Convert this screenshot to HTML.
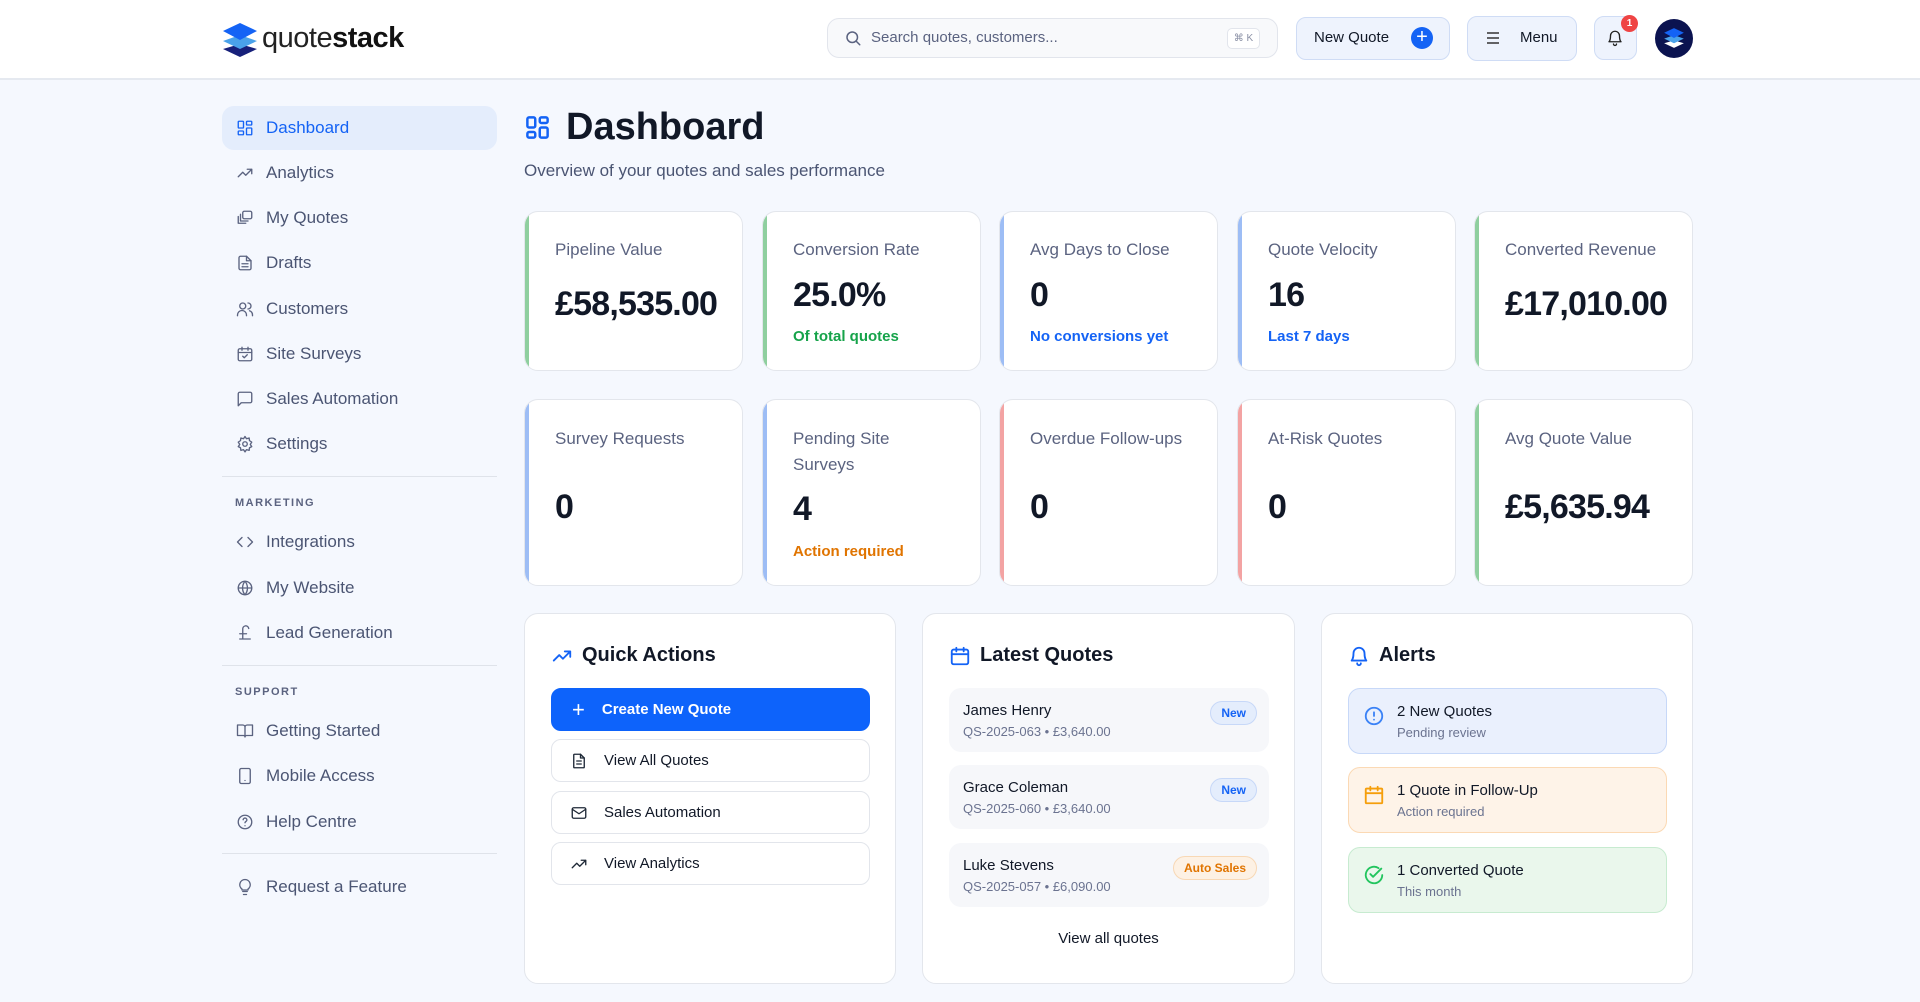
<!DOCTYPE html>
<html><head><meta charset="utf-8"><style>
*{box-sizing:border-box;margin:0;padding:0}
body{width:1920px;height:1002px;overflow:hidden;background:#f5f8fe;font-family:"Liberation Sans",sans-serif;color:#0f172a;position:relative}
.a{position:absolute}
.hdr{left:0;top:0;width:1920px;height:80px;background:#fff;border-bottom:2px solid #e5e9f0}
.nav{left:222px;width:275px;height:44px;display:flex;align-items:center;padding-left:14px;font-size:17px;color:#4b5573}
.nav svg{width:18px;height:18px;margin-right:12px;stroke:#5b6380;fill:none;stroke-width:1.8;stroke-linecap:round;stroke-linejoin:round}
.nav.act{background:#e4edfc;border-radius:12px;color:#1463f5}
.nav.act svg{stroke:#1463f5}
.sep{left:222px;width:275px;height:1px;background:#dfe3ea}
.sec{left:235px;font-size:11px;letter-spacing:1.5px;font-weight:bold;color:#5b6380}
.card{background:#fff;border:1px solid #e3e6ec;border-radius:14px;overflow:hidden}
.card .bar{position:absolute;left:0;top:0;bottom:0;width:4px}
.lbl{position:absolute;left:30px;font-size:17px;color:#5b6380;line-height:26px}
.val{position:absolute;left:30px;font-size:34px;font-weight:bold;color:#111827;letter-spacing:-0.8px}
.sub{position:absolute;left:30px;font-size:15px;font-weight:bold}
.panel{background:#fff;border:1px solid #e3e6ec;border-radius:14px}
.ptitle{position:absolute;top:30px;left:26px;font-size:20px;font-weight:bold;display:flex;align-items:center;color:#111827}
.ptitle svg{width:22px;height:22px;margin-right:9px;stroke:#1463f5;fill:none;stroke-width:2;stroke-linecap:round;stroke-linejoin:round}
.qa{position:absolute;left:26px;width:319px;height:43px;border:1.5px solid #e2e5eb;border-radius:10px;display:flex;align-items:center;padding-left:18px;font-size:15px;color:#111827}
.qa svg{width:18px;height:18px;margin-right:16px;stroke:#1f2937;fill:none;stroke-width:1.8;stroke-linecap:round;stroke-linejoin:round}
.lq{position:absolute;left:26px;width:320px;height:64px;background:#f6f7fa;border-radius:12px}
.lq .n{position:absolute;left:14px;top:14px;font-size:15px;color:#111827}
.lq .m{position:absolute;left:14px;top:36px;font-size:13px;color:#6b7390}
.badge{position:absolute;right:12px;top:13px;height:24px;padding:0 10px;border-radius:12px;font-size:12px;font-weight:bold;line-height:22px}
.al{position:absolute;left:26px;width:319px;height:66px;border-radius:12px;border:1.5px solid}
.al svg{position:absolute;left:14px;top:16px;width:22px;height:22px;fill:none;stroke-width:2;stroke-linecap:round;stroke-linejoin:round}
.al .n{position:absolute;left:48px;top:14px;font-size:15px;color:#111827}
.al .m{position:absolute;left:48px;top:36px;font-size:13px;color:#6b7390}
</style></head><body>
<div class="a hdr"></div>
<svg class="a" style="left:221px;top:22px" width="38" height="36" viewBox="0 0 38 36">
<path d="M19 22 L36 27 L19 35 L2 27 Z" fill="#17207a"/>
<path d="M19 13 L36 19 L19 27 L2 19 Z" fill="#4aa2ea"/>
<path d="M19 1 L36 9 L19 18 L2 9 Z" fill="#1463f5"/>
</svg>
<div class="a" style="left:262px;top:22px;font-size:29px;color:#111;letter-spacing:-0.5px"><span style="color:#222">quote</span><b>stack</b></div>
<div class="a" style="left:827px;top:18px;width:451px;height:40px;border:1.5px solid #e2e5ec;border-radius:12px;background:#f8f9fb"></div>
<svg class="a" style="left:844px;top:29px" width="18" height="18" viewBox="0 0 24 24" fill="none" stroke="#5b6380" stroke-width="2" stroke-linecap="round"><circle cx="11" cy="11" r="7"/><path d="M16.5 16.5L21 21"/></svg>
<div class="a" style="left:871px;top:29px;font-size:15px;color:#5b6380">Search quotes, customers...</div>
<div class="a" style="left:1227px;top:28px;width:33px;height:21px;border:1px solid #e2e5ec;border-radius:5px;background:#fff;font-size:10px;color:#8a90a5;text-align:center;line-height:19px">⌘ K</div>
<div class="a" style="left:1296px;top:17px;width:154px;height:43px;border:1.5px solid #cfdcf5;border-radius:10px;background:#eef3fd"></div>
<div class="a" style="left:1314px;top:29px;font-size:15px;color:#111827">New Quote</div>
<div class="a" style="left:1411px;top:27px;width:22px;height:22px;border-radius:50%;background:#1463f5;color:#fff;font-size:20px;line-height:21px;text-align:center">+</div>
<div class="a" style="left:1467px;top:16px;width:110px;height:45px;border:1.5px solid #cfdcf5;border-radius:10px;background:#eef3fd"></div>
<svg class="a" style="left:1486px;top:32px" width="14" height="12" viewBox="0 0 14 12" stroke="#333" stroke-width="1.6"><path d="M1 1h12M1 6h12M1 11h12"/></svg>
<div class="a" style="left:1520px;top:29px;font-size:15px;color:#111827">Menu</div>
<div class="a" style="left:1594px;top:16px;width:43px;height:44px;border:1.5px solid #cfdcf5;border-radius:10px;background:#eef3fd"></div>
<svg class="a" style="left:1606px;top:28px" width="18" height="20" viewBox="0 0 24 24" fill="none" stroke="#222" stroke-width="1.8" stroke-linecap="round" stroke-linejoin="round"><path d="M6 9a6 6 0 0 1 12 0c0 6 2 8 2 8H4s2-2 2-8"/><path d="M10 20a2 2 0 0 0 4 0"/></svg>
<div class="a" style="left:1621px;top:15px;width:17px;height:17px;border-radius:50%;background:#ef4444;color:#fff;font-size:10px;font-weight:bold;text-align:center;line-height:17px">1</div>
<div class="a" style="left:1655px;top:19px;width:38px;height:39px;border-radius:50%;background:#0b1350"></div>
<svg class="a" style="left:1663px;top:27px" width="22" height="22" viewBox="0 0 38 36"><path d="M19 22 L36 27 L19 35 L2 27 Z" fill="#fff"/><path d="M19 13 L36 19 L19 27 L2 19 Z" fill="#4aa2ea"/><path d="M19 1 L36 9 L19 18 L2 9 Z" fill="#1463f5"/></svg>

<div class="a nav act" style="top:106px"><svg viewBox="0 0 24 24"><rect x="3" y="3" width="7" height="9" rx="1"/><rect x="14" y="3" width="7" height="5" rx="1"/><rect x="14" y="12" width="7" height="9" rx="1"/><rect x="3" y="16" width="7" height="5" rx="1"/></svg>Dashboard</div>
<div class="a nav" style="top:151px"><svg viewBox="0 0 24 24"><path d="M3 17l6-6 4 4 8-8M15 7h6v6"/></svg>Analytics</div>
<div class="a nav" style="top:196px"><svg viewBox="0 0 24 24"><rect x="9" y="3" width="12" height="10" rx="2"/><path d="M6 7v9h10M3 10v9h10"/></svg>My Quotes</div>
<div class="a nav" style="top:241px"><svg viewBox="0 0 24 24"><path d="M14 3H6a2 2 0 0 0-2 2v14a2 2 0 0 0 2 2h12a2 2 0 0 0 2-2V9z"/><path d="M14 3v6h6M8 13h8M8 17h8"/></svg>Drafts</div>
<div class="a nav" style="top:287px"><svg viewBox="0 0 24 24"><circle cx="9" cy="8" r="4"/><path d="M2 21v-1a6 6 0 0 1 12 0v1M16 4a4 4 0 0 1 0 8M22 21v-1a6 6 0 0 0-4-5.6"/></svg>Customers</div>
<div class="a nav" style="top:332px"><svg viewBox="0 0 24 24"><rect x="3" y="5" width="18" height="16" rx="2"/><path d="M8 3v4M16 3v4M3 10h18M9 15l2 2 4-4"/></svg>Site Surveys</div>
<div class="a nav" style="top:377px"><svg viewBox="0 0 24 24"><path d="M21 15a2 2 0 0 1-2 2H7l-4 4V5a2 2 0 0 1 2-2h14a2 2 0 0 1 2 2z"/></svg>Sales Automation</div>
<div class="a nav" style="top:422px"><svg viewBox="0 0 24 24"><circle cx="12" cy="12" r="3"/><path d="M12 2l2 3 3.5-1 .5 3.5 3 2-2 3 2 3-3 1.5-.5 3.5-3.5-1-2 3-2-3-3.5 1-.5-3.5-3-1.5 2-3-2-3 3-2 .5-3.5 3.5 1z"/></svg>Settings</div>
<div class="a sep" style="top:476px"></div>
<div class="a sec" style="top:497px">MARKETING</div>
<div class="a nav" style="top:520px"><svg viewBox="0 0 24 24"><path d="M8 6l-6 6 6 6M16 6l6 6-6 6"/></svg>Integrations</div>
<div class="a nav" style="top:566px"><svg viewBox="0 0 24 24"><circle cx="12" cy="12" r="9"/><path d="M3 12h18M12 3a14 14 0 0 1 0 18M12 3a14 14 0 0 0 0 18"/></svg>My Website</div>
<div class="a nav" style="top:611px"><svg viewBox="0 0 24 24"><path d="M17 6a4 4 0 0 0-8 1v13M5 20h14M5 13h9"/></svg>Lead Generation</div>
<div class="a sep" style="top:665px"></div>
<div class="a sec" style="top:686px">SUPPORT</div>
<div class="a nav" style="top:709px"><svg viewBox="0 0 24 24"><path d="M2 4h7a3 3 0 0 1 3 3v13a2 2 0 0 0-2-2H2zM22 4h-7a3 3 0 0 0-3 3v13a2 2 0 0 1 2-2h8z"/></svg>Getting Started</div>
<div class="a nav" style="top:754px"><svg viewBox="0 0 24 24"><rect x="5" y="2" width="14" height="20" rx="2"/><path d="M12 18h.01"/></svg>Mobile Access</div>
<div class="a nav" style="top:800px"><svg viewBox="0 0 24 24"><circle cx="12" cy="12" r="9"/><path d="M9.5 9a2.5 2.5 0 0 1 5 .5c0 1.5-2.5 2-2.5 3.5M12 17h.01"/></svg>Help Centre</div>
<div class="a sep" style="top:853px"></div>
<div class="a nav" style="top:865px"><svg viewBox="0 0 24 24"><path d="M9 18h6M10 22h4M12 2a7 7 0 0 0-4 12.7V16h8v-1.3A7 7 0 0 0 12 2z"/></svg>Request a Feature</div>

<svg class="a" style="left:524px;top:114px" width="27" height="27" viewBox="0 0 24 24" fill="none" stroke="#1463f5" stroke-width="2.2"><rect x="3" y="3" width="7" height="9" rx="1.5"/><rect x="14" y="3" width="7" height="5" rx="1.5"/><rect x="14" y="12" width="7" height="9" rx="1.5"/><rect x="3" y="16" width="7" height="5" rx="1.5"/></svg>
<div class="a" style="left:566px;top:106px;font-size:38px;font-weight:bold;color:#111827">Dashboard</div>
<div class="a" style="left:524px;top:161px;font-size:17px;color:#4b5573">Overview of your quotes and sales performance</div>

<div class="a card" style="left:524px;top:211px;width:219px;height:160px"><div class="bar" style="background:#8fcf9f"></div><div class="lbl" style="top:25px">Pipeline Value</div><div class="val" style="top:73px">£58,535.00</div></div>
<div class="a card" style="left:762px;top:211px;width:219px;height:160px"><div class="bar" style="background:#8fcf9f"></div><div class="lbl" style="top:25px">Conversion Rate</div><div class="val" style="top:64px">25.0%</div><div class="sub" style="top:116px;color:#16a34a">Of total quotes</div></div>
<div class="a card" style="left:999px;top:211px;width:219px;height:160px"><div class="bar" style="background:#9dbdf5"></div><div class="lbl" style="top:25px">Avg Days to Close</div><div class="val" style="top:64px">0</div><div class="sub" style="top:116px;color:#1463f5">No conversions yet</div></div>
<div class="a card" style="left:1237px;top:211px;width:219px;height:160px"><div class="bar" style="background:#9dbdf5"></div><div class="lbl" style="top:25px">Quote Velocity</div><div class="val" style="top:64px">16</div><div class="sub" style="top:116px;color:#1463f5">Last 7 days</div></div>
<div class="a card" style="left:1474px;top:211px;width:219px;height:160px"><div class="bar" style="background:#8fcf9f"></div><div class="lbl" style="top:25px">Converted Revenue</div><div class="val" style="top:73px">£17,010.00</div></div>

<div class="a card" style="left:524px;top:399px;width:219px;height:187px"><div class="bar" style="background:#9dbdf5"></div><div class="lbl" style="top:26px">Survey Requests</div><div class="val" style="top:88px">0</div></div>
<div class="a card" style="left:762px;top:399px;width:219px;height:187px"><div class="bar" style="background:#9dbdf5"></div><div class="lbl" style="top:26px">Pending Site<br>Surveys</div><div class="val" style="top:90px">4</div><div class="sub" style="top:143px;color:#e07400">Action required</div></div>
<div class="a card" style="left:999px;top:399px;width:219px;height:187px"><div class="bar" style="background:#f3a3a3"></div><div class="lbl" style="top:26px">Overdue Follow-ups</div><div class="val" style="top:88px">0</div></div>
<div class="a card" style="left:1237px;top:399px;width:219px;height:187px"><div class="bar" style="background:#f3a3a3"></div><div class="lbl" style="top:26px">At-Risk Quotes</div><div class="val" style="top:88px">0</div></div>
<div class="a card" style="left:1474px;top:399px;width:219px;height:187px"><div class="bar" style="background:#8fcf9f"></div><div class="lbl" style="top:26px">Avg Quote Value</div><div class="val" style="top:88px">£5,635.94</div></div>

<div class="a panel" style="left:524px;top:613px;width:372px;height:371px">
<div class="ptitle"><svg viewBox="0 0 24 24"><path d="M3 17l6-6 4 4 8-8M15 7h6v6"/></svg>Quick Actions</div>
<div class="qa" style="top:74px;background:#0d63fb;border-color:#0d63fb;color:#fff;font-weight:bold"><span style="font-size:22px;font-weight:normal;margin-right:17px;margin-left:2px">+</span>Create New Quote</div>
<div class="qa" style="top:125px"><svg viewBox="0 0 24 24"><path d="M14 3H6a1 1 0 0 0-1 1v16a1 1 0 0 0 1 1h12a1 1 0 0 0 1-1V8z"/><path d="M14 3v5h5M9 12h6M9 16h6"/></svg>View All Quotes</div>
<div class="qa" style="top:177px"><svg viewBox="0 0 24 24"><rect x="3" y="5" width="18" height="14" rx="2"/><path d="M3 7l9 6 9-6"/></svg>Sales Automation</div>
<div class="qa" style="top:228px"><svg viewBox="0 0 24 24"><path d="M3 17l6-6 4 4 8-8M15 7h6v6"/></svg>View Analytics</div>
</div>

<div class="a panel" style="left:922px;top:613px;width:373px;height:371px">
<div class="ptitle"><svg viewBox="0 0 24 24"><rect x="3" y="5" width="18" height="16" rx="2"/><path d="M8 3v4M16 3v4M3 10h18"/></svg>Latest Quotes</div>
<div class="lq" style="top:74px"><div class="n">James Henry</div><div class="m">QS-2025-063 • £3,640.00</div><div class="badge" style="background:#e4edfc;border:1px solid #c7d8f8;color:#1463f5">New</div></div>
<div class="lq" style="top:151px"><div class="n">Grace Coleman</div><div class="m">QS-2025-060 • £3,640.00</div><div class="badge" style="background:#e4edfc;border:1px solid #c7d8f8;color:#1463f5">New</div></div>
<div class="lq" style="top:229px"><div class="n">Luke Stevens</div><div class="m">QS-2025-057 • £6,090.00</div><div class="badge" style="background:#fdf1e4;border:1px solid #f8d8b5;color:#e07400">Auto Sales</div></div>
<div style="position:absolute;top:316px;left:0;width:100%;text-align:center;font-size:15px;color:#111827">View all quotes</div>
</div>

<div class="a panel" style="left:1321px;top:613px;width:372px;height:371px">
<div class="ptitle"><svg viewBox="0 0 24 24"><path d="M6 9a6 6 0 0 1 12 0c0 6 2 8 2 8H4s2-2 2-8"/><path d="M10 20a2 2 0 0 0 4 0"/></svg>Alerts</div>
<div class="al" style="top:74px;background:#eaf0fd;border-color:#c7d8f8"><svg viewBox="0 0 24 24" stroke="#3b82f6"><circle cx="12" cy="12" r="9"/><path d="M12 8v4M12 16h.01"/></svg><div class="n">2 New Quotes</div><div class="m">Pending review</div></div>
<div class="al" style="top:153px;background:#fef3e8;border-color:#fbd9b4"><svg viewBox="0 0 24 24" stroke="#f59e0b"><rect x="3" y="5" width="18" height="16" rx="1"/><path d="M8 3v4M16 3v4M3 10h18"/></svg><div class="n">1 Quote in Follow-Up</div><div class="m">Action required</div></div>
<div class="al" style="top:233px;background:#eaf7ec;border-color:#c7ebd0"><svg viewBox="0 0 24 24" stroke="#22c55e"><path d="M21 12a9 9 0 1 1-4-7.5"/><path d="M8 11l3 3 9-9"/></svg><div class="n">1 Converted Quote</div><div class="m">This month</div></div>
</div>
</body></html>
